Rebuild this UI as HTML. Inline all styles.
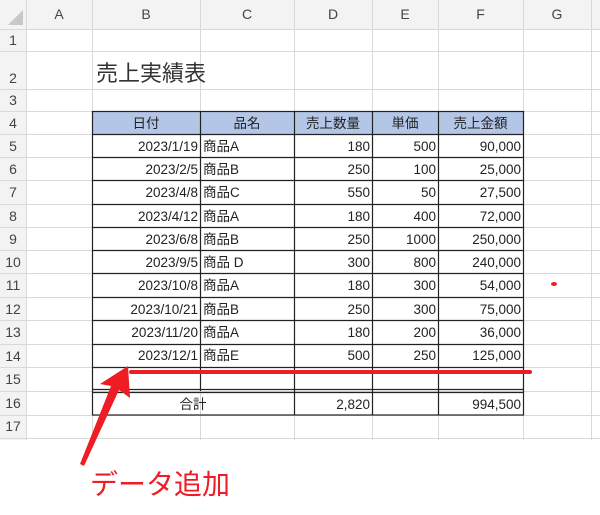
<!DOCTYPE html><html><head><meta charset="utf-8"><style>
body{margin:0;width:600px;height:515px;background:#fff;position:relative;overflow:hidden;font-family:"Liberation Sans","Noto Sans CJK JP",sans-serif;color:#222}
div{position:absolute}
.t{font-size:13.5px;line-height:23px;height:23px;white-space:nowrap}
.r{text-align:right}.c{text-align:center}
.h{font-size:14px;color:#444;text-align:center}
</style></head><body>
<svg width="600" height="515" style="position:absolute;left:0;top:0">
<rect x="0" y="0" width="600" height="29" fill="#f3f3f3"/>
<rect x="0" y="0" width="26" height="440" fill="#f3f3f3"/>
<polygon points="8,25 23,25 23,10" fill="#c8c8c8"/>
<g stroke="#d9d9d9" stroke-width="1">
<line x1="26.5" y1="0" x2="26.5" y2="440"/><line x1="92.5" y1="0" x2="92.5" y2="440"/><line x1="200.5" y1="0" x2="200.5" y2="440"/><line x1="294.5" y1="0" x2="294.5" y2="440"/><line x1="372.5" y1="0" x2="372.5" y2="440"/><line x1="438.5" y1="0" x2="438.5" y2="440"/><line x1="523.5" y1="0" x2="523.5" y2="440"/><line x1="591.5" y1="0" x2="591.5" y2="440"/>
<line x1="0" y1="29.5" x2="600" y2="29.5"/><line x1="0" y1="51.5" x2="600" y2="51.5"/><line x1="0" y1="89.5" x2="600" y2="89.5"/><line x1="0" y1="111.5" x2="600" y2="111.5"/><line x1="0" y1="134.5" x2="600" y2="134.5"/><line x1="0" y1="157.5" x2="600" y2="157.5"/><line x1="0" y1="180.5" x2="600" y2="180.5"/><line x1="0" y1="204.5" x2="600" y2="204.5"/><line x1="0" y1="227.5" x2="600" y2="227.5"/><line x1="0" y1="250.5" x2="600" y2="250.5"/><line x1="0" y1="273.5" x2="600" y2="273.5"/><line x1="0" y1="297.5" x2="600" y2="297.5"/><line x1="0" y1="320.5" x2="600" y2="320.5"/><line x1="0" y1="344.5" x2="600" y2="344.5"/><line x1="0" y1="367.5" x2="600" y2="367.5"/><line x1="0" y1="391.5" x2="600" y2="391.5"/><line x1="0" y1="415.5" x2="600" y2="415.5"/><line x1="0" y1="438.5" x2="600" y2="438.5"/>
</g>
<rect x="92" y="112" width="431" height="22" fill="#b4c6e7"/>
<g stroke="#222" stroke-width="1.2" fill="none">
<rect x="92.5" y="111.5" width="431" height="303.5"/>
<line x1="200.5" y1="111" x2="200.5" y2="391"/><line x1="294.5" y1="111" x2="294.5" y2="415"/><line x1="372.5" y1="111" x2="372.5" y2="415"/><line x1="438.5" y1="111" x2="438.5" y2="415"/>
<line x1="92" y1="134.5" x2="523" y2="134.5"/><line x1="92" y1="157.5" x2="523" y2="157.5"/><line x1="92" y1="180.5" x2="523" y2="180.5"/><line x1="92" y1="204.5" x2="523" y2="204.5"/><line x1="92" y1="227.5" x2="523" y2="227.5"/><line x1="92" y1="250.5" x2="523" y2="250.5"/><line x1="92" y1="273.5" x2="523" y2="273.5"/><line x1="92" y1="297.5" x2="523" y2="297.5"/><line x1="92" y1="320.5" x2="523" y2="320.5"/><line x1="92" y1="344.5" x2="523" y2="344.5"/><line x1="92" y1="367.5" x2="523" y2="367.5"/><line x1="92" y1="389.5" x2="523" y2="389.5"/><line x1="92" y1="392.5" x2="523" y2="392.5"/>
</g>
<line x1="131" y1="372" x2="530" y2="372" stroke="#ee1c25" stroke-width="4" stroke-linecap="round"/>
<polygon points="128,366 130,398 119,390 84,466 80,464 111,386 100,384" fill="#ee1c25"/>
<ellipse cx="554" cy="284" rx="3" ry="2" fill="#ee1c25"/>
</svg>
<div class="h" style="left:26px;top:6px;width:66px">A</div><div class="h" style="left:92px;top:6px;width:108px">B</div><div class="h" style="left:200px;top:6px;width:94px">C</div><div class="h" style="left:294px;top:6px;width:78px">D</div><div class="h" style="left:372px;top:6px;width:66px">E</div><div class="h" style="left:438px;top:6px;width:85px">F</div><div class="h" style="left:523px;top:6px;width:68px">G</div>
<div class="h" style="left:0;width:26px;top:32px">1</div><div class="h" style="left:0;width:26px;top:70px">2</div><div class="h" style="left:0;width:26px;top:92px">3</div><div class="h" style="left:0;width:26px;top:115px">4</div><div class="h" style="left:0;width:26px;top:138px">5</div><div class="h" style="left:0;width:26px;top:161px">6</div><div class="h" style="left:0;width:26px;top:184px">7</div><div class="h" style="left:0;width:26px;top:208px">8</div><div class="h" style="left:0;width:26px;top:231px">9</div><div class="h" style="left:0;width:26px;top:254px">10</div><div class="h" style="left:0;width:26px;top:277px">11</div><div class="h" style="left:0;width:26px;top:301px">12</div><div class="h" style="left:0;width:26px;top:324px">13</div><div class="h" style="left:0;width:26px;top:348px">14</div><div class="h" style="left:0;width:26px;top:371px">15</div><div class="h" style="left:0;width:26px;top:395px">16</div><div class="h" style="left:0;width:26px;top:418px">17</div>
<div style="left:96px;top:56px;font-size:22px;color:#333">売上実績表</div>
<div class="t c" style="left:92px;top:112px;width:108px">日付</div><div class="t c" style="left:200px;top:112px;width:94px">品名</div><div class="t c" style="left:294px;top:112px;width:78px">売上数量</div><div class="t c" style="left:372px;top:112px;width:66px">単価</div><div class="t c" style="left:438px;top:112px;width:85px">売上金額</div>
<div style="left:0;top:135px;width:600px">
<div class="t r" style="left:92px;top:0;width:106px">2023/1/19</div><div class="t" style="left:203px;top:0">商品A</div><div class="t r" style="left:294px;top:0;width:76px">180</div><div class="t r" style="left:372px;top:0;width:64px">500</div><div class="t r" style="left:438px;top:0;width:83px">90,000</div>
<div class="t r" style="left:92px;top:23px;width:106px">2023/2/5</div><div class="t" style="left:203px;top:23px">商品B</div><div class="t r" style="left:294px;top:23px;width:76px">250</div><div class="t r" style="left:372px;top:23px;width:64px">100</div><div class="t r" style="left:438px;top:23px;width:83px">25,000</div>
<div class="t r" style="left:92px;top:46px;width:106px">2023/4/8</div><div class="t" style="left:203px;top:46px">商品C</div><div class="t r" style="left:294px;top:46px;width:76px">550</div><div class="t r" style="left:372px;top:46px;width:64px">50</div><div class="t r" style="left:438px;top:46px;width:83px">27,500</div>
<div class="t r" style="left:92px;top:70px;width:106px">2023/4/12</div><div class="t" style="left:203px;top:70px">商品A</div><div class="t r" style="left:294px;top:70px;width:76px">180</div><div class="t r" style="left:372px;top:70px;width:64px">400</div><div class="t r" style="left:438px;top:70px;width:83px">72,000</div>
<div class="t r" style="left:92px;top:93px;width:106px">2023/6/8</div><div class="t" style="left:203px;top:93px">商品B</div><div class="t r" style="left:294px;top:93px;width:76px">250</div><div class="t r" style="left:372px;top:93px;width:64px">1000</div><div class="t r" style="left:438px;top:93px;width:83px">250,000</div>
<div class="t r" style="left:92px;top:116px;width:106px">2023/9/5</div><div class="t" style="left:203px;top:116px">商品 D</div><div class="t r" style="left:294px;top:116px;width:76px">300</div><div class="t r" style="left:372px;top:116px;width:64px">800</div><div class="t r" style="left:438px;top:116px;width:83px">240,000</div>
<div class="t r" style="left:92px;top:139px;width:106px">2023/10/8</div><div class="t" style="left:203px;top:139px">商品A</div><div class="t r" style="left:294px;top:139px;width:76px">180</div><div class="t r" style="left:372px;top:139px;width:64px">300</div><div class="t r" style="left:438px;top:139px;width:83px">54,000</div>
<div class="t r" style="left:92px;top:163px;width:106px">2023/10/21</div><div class="t" style="left:203px;top:163px">商品B</div><div class="t r" style="left:294px;top:163px;width:76px">250</div><div class="t r" style="left:372px;top:163px;width:64px">300</div><div class="t r" style="left:438px;top:163px;width:83px">75,000</div>
<div class="t r" style="left:92px;top:186px;width:106px">2023/11/20</div><div class="t" style="left:203px;top:186px">商品A</div><div class="t r" style="left:294px;top:186px;width:76px">180</div><div class="t r" style="left:372px;top:186px;width:64px">200</div><div class="t r" style="left:438px;top:186px;width:83px">36,000</div>
<div class="t r" style="left:92px;top:209px;width:106px">2023/12/1</div><div class="t" style="left:203px;top:209px">商品E</div><div class="t r" style="left:294px;top:209px;width:76px">500</div><div class="t r" style="left:372px;top:209px;width:64px">250</div><div class="t r" style="left:438px;top:209px;width:83px">125,000</div>
</div>
<div class="t c" style="left:92px;top:393px;width:202px">合計</div><div class="t r" style="left:294px;top:393px;width:76px">2,820</div><div class="t r" style="left:438px;top:393px;width:83px">994,500</div>
<div style="left:90px;top:468px;font-size:28px;line-height:34px;color:#ee1c25">データ追加</div>
</body></html>
